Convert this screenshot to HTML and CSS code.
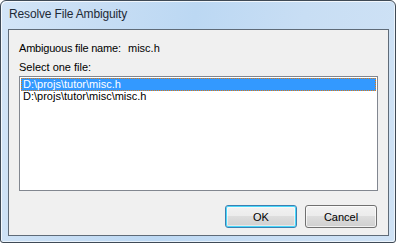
FILE: index.html
```html
<!DOCTYPE html>
<html>
<head>
<meta charset="utf-8">
<link rel="stylesheet" href="styles.css">
</head>
<body>
<div class="window">
  <div class="titlebar">Resolve File Ambiguity</div>
  <div class="client">
    <div class="row">
      <span class="label">Ambiguous file name:</span>
      <span class="value">misc.h</span>
    </div>
    <div class="row select-label">Select one file:</div>
    <div class="listbox">
      <div class="item selected">D:\projs\tutor\misc.h</div>
      <div class="item">D:\projs\tutor\misc\misc.h</div>
    </div>
    <div class="buttons">
      <button class="btn default">OK</button>
      <button class="btn">Cancel</button>
    </div>
  </div>
</div>
</body>
</html>
```
FILE: styles.css
```css
html, body {
  margin: 0;
  padding: 0;
  background: #ffffff;
}
.window {
  box-sizing: border-box;
  width: 396px;
  height: 243px;
  border: 1px solid #3f4a56;
  border-radius: 6px 6px 3px 3px;
  background: linear-gradient(100deg, #d3e5f7 0%, #c6ddf4 25%, #bcd8f3 45%, #c8def4 70%, #cfe2f5 100%);
  box-shadow: inset 1px 1px 0 rgba(255,255,255,0.75), inset -1px -1px 0 rgba(255,255,255,0.6);
  padding: 0 6px 6px 7px;
  display: flex;
  flex-direction: column;
}
.titlebar {
  height: 28px;
  font-family: "Liberation Sans", Arial, sans-serif;
  font-size: 12px;
  color: #1e2a36;
  line-height: 26px;
  padding-left: 1px;
  letter-spacing: -0.15px;
}
.client {
  box-sizing: border-box;
  flex: 1;
  background: #f0f0f0;
  border: 1px solid #5f6b78;
  padding: 12px 10px 0 10px;
  font-family: "Liberation Sans", Arial, sans-serif;
  font-size: 11px;
  color: #000;
  display: flex;
  flex-direction: column;
}
.row {
  height: 13px;
  line-height: 13px;
  display: flex;
}
.label {
  flex: 0 0 109px;
  min-width: 0;
  white-space: nowrap;
  letter-spacing: -0.2px;
}
.select-label {
  margin-top: 6px;
}
.listbox {
  box-sizing: border-box;
  margin-top: 2px;
  width: 359px;
  height: 115px;
  background: #ffffff;
  border: 1px solid #828790;
  padding: 1px;
}
.item {
  box-sizing: border-box;
  height: 13px;
  line-height: 11px;
  padding-left: 2px;
  white-space: nowrap;
}
.selected {
  background: #3399ff;
  color: #ffffff;
  border: 1px dotted #e07a10;
  padding-left: 1px;
}
.buttons {
  display: flex;
  justify-content: flex-end;
  gap: 8px;
  margin-top: 14px;
  padding-right: 1px;
}
.btn {
  box-sizing: border-box;
  width: 72px;
  height: 23px;
  margin: 0;
  padding: 0;
  font-family: "Liberation Sans", Arial, sans-serif;
  font-size: 11px;
  color: #000;
  border: 1px solid #707070;
  border-radius: 3px;
  background: linear-gradient(#f2f2f2 0%, #ebebeb 50%, #dddddd 50%, #cfcfcf 100%);
  box-shadow: inset 0 0 0 1px rgba(255,255,255,0.7);
}
.btn.default {
  border-color: #3c7fb1;
  box-shadow: inset 0 0 0 1px #48d8fb, inset 0 0 0 2px rgba(255,255,255,0.5);
}
```
